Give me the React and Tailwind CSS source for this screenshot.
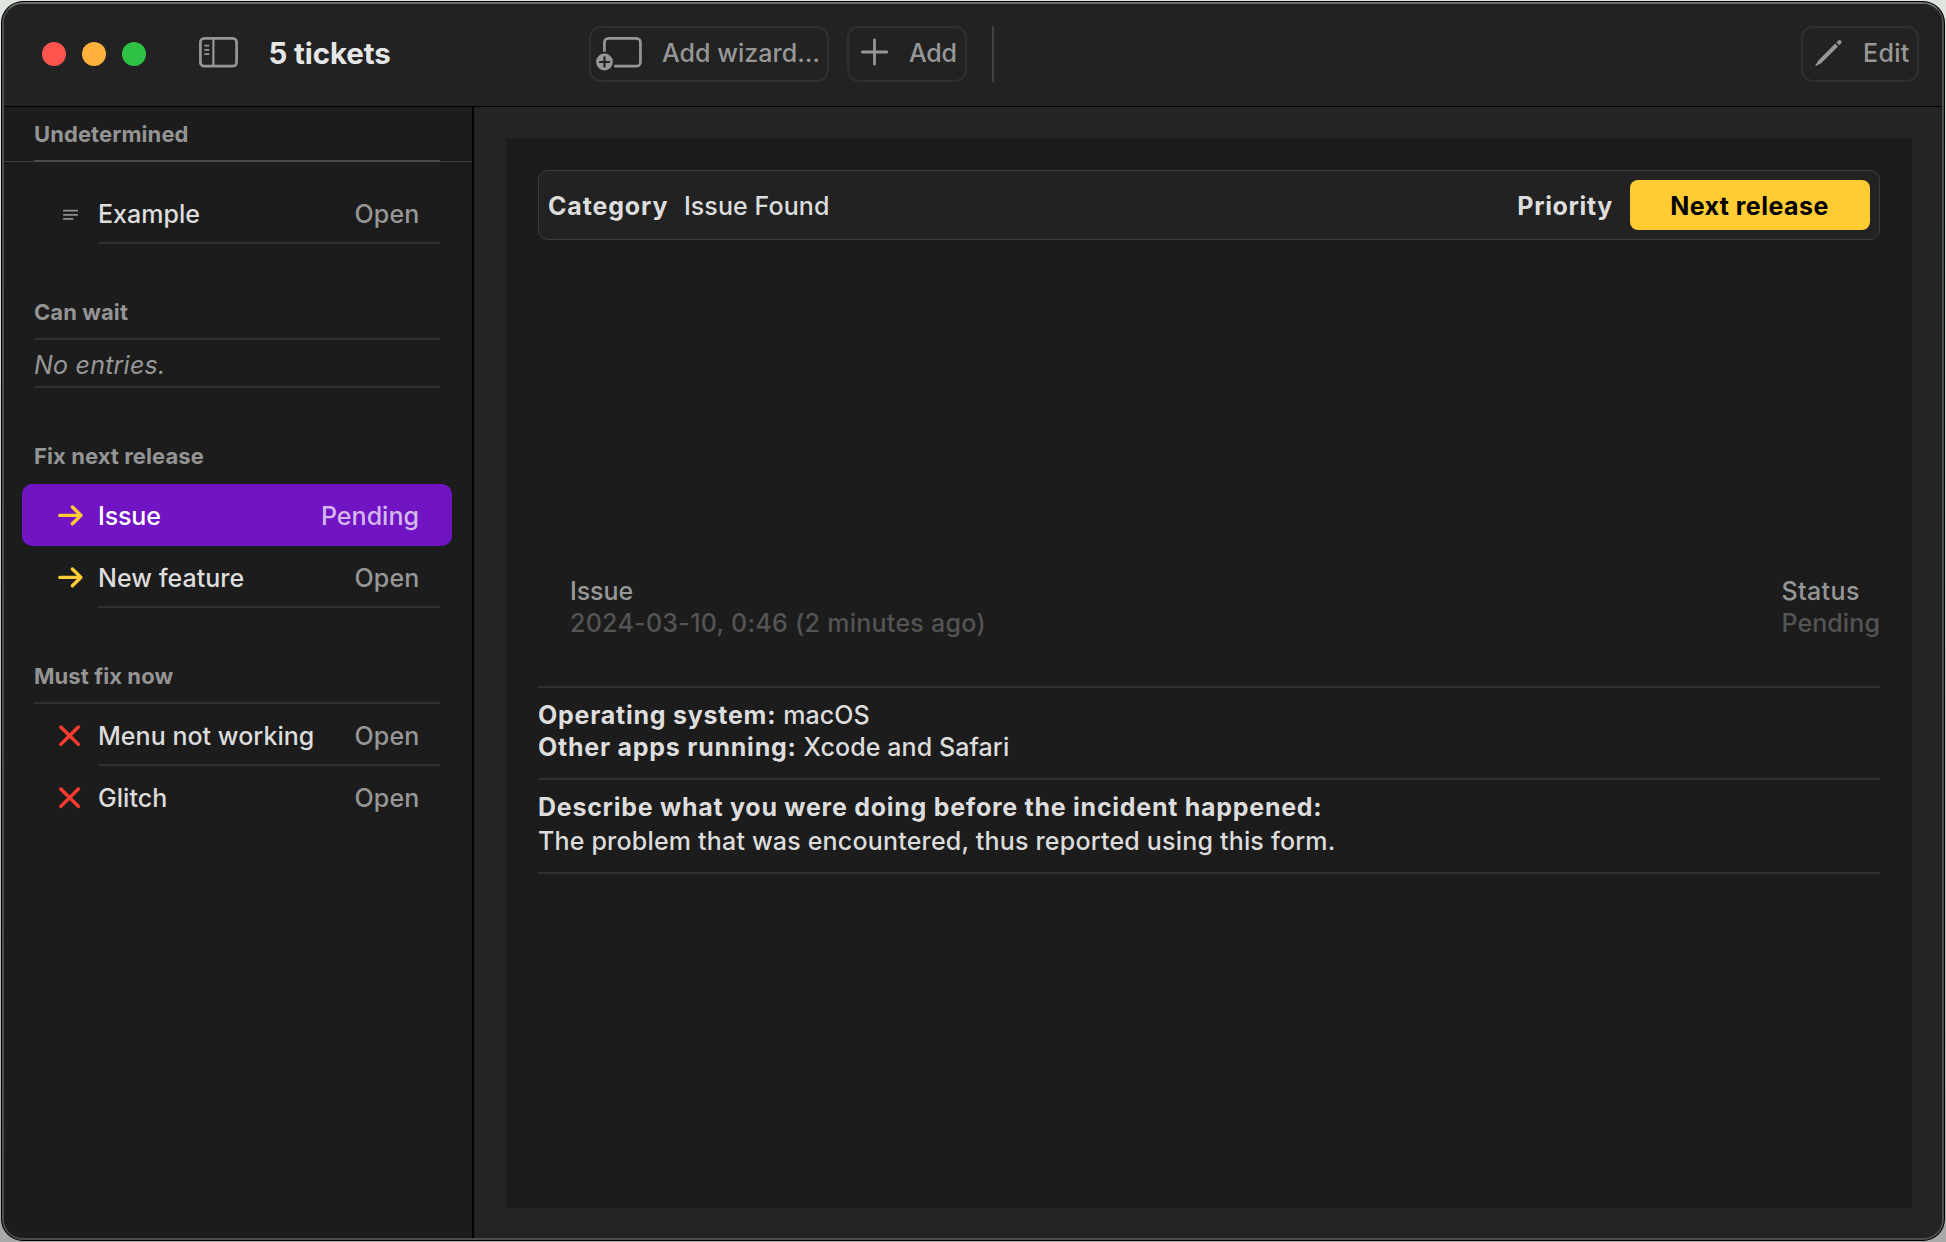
function T({ className = '', children }) {
  return <span className={`block whitespace-nowrap leading-8 ${className}`}>{children}</span>;
}

const body = 'text-[25px] tracking-[0.03px]';
const strong = 'text-[25px] font-bold tracking-[0.75px]';

function SidebarIcon() {
  return (
    <svg className="h-8 w-10" viewBox="0 0 40 32" fill="none" stroke="#979797" strokeLinecap="round">
      <rect x="1.4" y="2.4" width="36.2" height="27.8" rx="3.8" strokeWidth="2.7" />
      <path d="M14.4 3V30" strokeWidth="2.2" strokeLinecap="butt" />
      <path d="M6 9.6h3.6M6 13.9h3.6M6 18.2h3.6" strokeWidth="1.7" />
    </svg>
  );
}

function WizardIcon() {
  return (
    <svg className="h-9 w-[46px]" viewBox="0 0 46 36" fill="none">
      <path d="M8.4 15.8V6.4A4 4 0 0 1 12.4 2.4h28A4 4 0 0 1 44.4 6.4v19.8a4 4 0 0 1-4 4H18.2" stroke="#979797" strokeWidth="2.7" />
      <circle cx="8.5" cy="26" r="8.4" fill="#979797" />
      <path d="M8.5 21.4v9.2M3.9 26h9.2" stroke="#222222" strokeWidth="2.2" strokeLinecap="round" />
    </svg>
  );
}

function PlusIcon() {
  return (
    <svg className="size-7" viewBox="0 0 28 28" fill="none" stroke="#979797" strokeWidth="2.8" strokeLinecap="round">
      <path d="M14.5 1.8v24.4M2.3 14h24.4" />
    </svg>
  );
}

function PencilIcon() {
  return (
    <svg className="size-7" viewBox="0 0 28 28" fill="#979797">
      <path d="M20.2 4.6 23 7.4 6.2 24.2 1.2 26.8a.5.5 0 0 1-.7-.7L3.4 21.4Z" />
      <path d="M21.4 3.4 23.3 1.5a1.9 1.9 0 0 1 2.5 0l.3.3a1.9 1.9 0 0 1 0 2.5L24.2 6.2Z" />
    </svg>
  );
}

function ArrowIcon() {
  return (
    <svg className="h-6 w-[26px]" viewBox="0 0 26 24" fill="none" stroke="#ffcc33" strokeWidth="3.4" strokeLinecap="round" strokeLinejoin="round">
      <path d="M1.8 12.4H22.8M14.4 4 23 12.4l-8.6 8.4" />
    </svg>
  );
}

function CrossIcon() {
  return (
    <svg className="h-6 w-[26px]" viewBox="0 0 26 24" fill="none" stroke="#ff3b30" strokeWidth="3.4" strokeLinecap="round">
      <path d="M2.8 4 20.4 21.4M20.4 4 2.8 21.4" />
    </svg>
  );
}

function LinesIcon() {
  return (
    <svg className="h-6 w-[26px]" viewBox="0 0 26 24" fill="none" stroke="#8f8f8f" strokeWidth="1.8" strokeLinecap="round">
      <path d="M5.8 9.7h13.4M5.8 13.8h13.4M5.8 17.9h8.8" />
    </svg>
  );
}

function Heading({ className = '', children }) {
  return (
    <div className={`ml-[30px] ${className}`}>
      <T className="text-[22px] font-bold tracking-[0.08px] text-[#949494]">{children}</T>
    </div>
  );
}

function Rule() {
  return <div className="mr-8 ml-[30px] h-0.5 bg-[#303030]" />;
}

function Row({ icon, name, status, last }) {
  return (
    <div className="flex h-[62px] pl-[54px]">
      <div className="w-10 pt-[19px]">{icon}</div>
      <div className={`mr-8 flex flex-1 justify-between border-b-2 pt-4 pr-[20.5px] ${last ? 'border-transparent' : 'border-[#303030]'}`}>
        <T className={`${body} text-[#dddddd]`}>{name}</T>
        <T className="text-[25px] tracking-[0.15px] text-[#979797]">{status}</T>
      </div>
    </div>
  );
}

function ToolButton({ className, children }) {
  return (
    <div className={`flex h-14 items-start rounded-xl border-2 border-[#2f2f2f] text-[#979797] ${className}`}>
      {children}
    </div>
  );
}

function Toolbar() {
  return (
    <header className="flex h-[103px] shrink-0 items-start border-b border-black bg-[#222222] pt-[22px] pr-[23px]">
      <div className="flex gap-4 pt-4 pl-[38px]">
        <div className="size-6 rounded-full bg-[#ff544e]" />
        <div className="size-6 rounded-full bg-[#ffb13b]" />
        <div className="size-6 rounded-full bg-[#2fc146]" />
      </div>
      <div className="ml-[53px] pt-[10px]">
        <SidebarIcon />
      </div>
      <T className="ml-[29.5px] w-[320.5px] pt-[11px] text-[29.5px] font-bold tracking-[-0.12px] text-[#e6e6e6]">5 tickets</T>
      <ToolButton className="w-60 pl-[5px]">
        <div className="pt-2">
          <WizardIcon />
        </div>
        <T className="ml-[20px] pt-[9px] text-[25px] tracking-[0.02px]">Add wizard…</T>
      </ToolButton>
      <ToolButton className="ml-[18px] w-[120px] pl-[11px]">
        <div className="pt-[10px]">
          <PlusIcon />
        </div>
        <T className="ml-[21px] pt-[9px] text-[25px] tracking-[-0.25px]">Add</T>
      </ToolButton>
      <div className="ml-[25px] h-14 w-0.5 bg-[#414141]" />
      <ToolButton className="ml-auto w-[118px] pl-3">
        <div className="pt-[11px]">
          <PencilIcon />
        </div>
        <T className="ml-[20px] pt-[9px] text-[25px] tracking-[0.3px]">Edit</T>
      </ToolButton>
    </header>
  );
}

function Sidebar() {
  return (
    <aside className="w-[470px] shrink-0 border-r-2 border-black bg-[#1c1c1c]">
      <Heading className="pt-[11px]">Undetermined</Heading>
      <div className="mt-[10px] flex h-0.5">
        <div className="mt-px h-px w-[30px] bg-[#3c3c3c]" />
        <div className="h-0.5 flex-1 bg-[#4a4a4a]" />
        <div className="mt-px h-px w-8 bg-[#3c3c3c]" />
      </div>
      <div className="pt-5">
        <Row icon={<LinesIcon />} name="Example" status="Open" />
      </div>

      <Heading className="pt-[52px] pb-[10px]">Can wait</Heading>
      <Rule />
      <T className="mt-[9px] mb-[5px] ml-[30px] text-[25px] tracking-[0.22px] text-[#979797] italic">No entries.</T>
      <Rule />

      <Heading className="pt-[52px] pb-3">Fix next release</Heading>
      <div className="mr-5 ml-[18px] flex h-[62px] rounded-[10px] bg-[#7014c4] pr-[33px] pl-9">
        <div className="w-10 pt-[19px]">
          <ArrowIcon />
        </div>
        <div className="flex flex-1 justify-between pt-4">
          <T className="text-[25px] tracking-[-0.15px] text-white">Issue</T>
          <T className="text-[25px] tracking-[0.02px] text-[#d4b8ed]">Pending</T>
        </div>
      </div>
      <Row icon={<ArrowIcon />} name="New feature" status="Open" />

      <Heading className="pt-[52px] pb-[10px]">Must fix now</Heading>
      <Rule />
      <Row icon={<CrossIcon />} name="Menu not working" status="Open" />
      <Row icon={<CrossIcon />} name="Glitch" status="Open" last />
    </aside>
  );
}

function Field({ label, value }) {
  return (
    <div className="flex">
      <T className={strong}>{label}</T>
      <T className="ml-[7px] text-[25px] tracking-[0.08px]">{value}</T>
    </div>
  );
}

function Detail() {
  return (
    <main className="flex-1 bg-[#242424] pt-[31px] pr-[30px] pb-[30px] pl-8">
      <div className="h-full bg-[#1c1c1c] px-8 pt-8 text-[#dddddd]">
        <div className="flex h-[70px] items-start rounded-[10px] border border-[#3d3d3d] bg-[#222222] pt-[9px] pr-[9px] pl-[9px]">
          <T className="pt-[10px] text-[25px] font-bold tracking-[0.85px]">Category</T>
          <T className="ml-[15.5px] pt-[10px] text-[25px] tracking-[0.1px]">Issue Found</T>
          <T className="mr-[17px] ml-auto pt-[10px] text-[25px] font-bold tracking-[0.64px]">Priority</T>
          <div className="flex h-[50px] w-60 justify-center rounded-lg bg-[#ffcc33] pt-[10px] pr-px text-black">
            <T className="text-[25px] font-bold tracking-[0.45px]">Next release</T>
          </div>
        </div>

        <div className="mt-[335px] flex justify-between pl-8">
          <div>
            <T className="text-[25px] tracking-[-0.1px] text-[#979797]">Issue</T>
            <T className="text-[25px] tracking-[0.28px] text-[#545454]">2024-03-10, 0:46 (2 minutes ago)</T>
          </div>
          <div>
            <T className="text-[25px] tracking-[0.4px] text-[#979797]">Status</T>
            <T className="text-[25px] tracking-[0.1px] text-[#545454]">Pending</T>
          </div>
        </div>

        <div className="mt-[47px] border-y-2 border-[#303030] pt-[11px] pb-[15px]">
          <Field label="Operating system:" value="macOS" />
          <Field label="Other apps running:" value="Xcode and Safari" />
        </div>
        <div className="border-b-2 border-[#303030] pt-[11px] pb-[15px]">
          <T className="text-[25px] font-bold tracking-[0.73px]">Describe what you were doing before the incident happened:</T>
          <T className="mt-0.5 text-[25px] tracking-[0.19px]">The problem that was encountered, thus reported using this form.</T>
        </div>
      </div>
    </main>
  );
}

export default function App() {
  return (
    <div className="h-[1242px] w-[1946px] overflow-hidden bg-linear-to-b from-[#dfe6e0] to-[#a8a8a8] p-px font-['Inter',sans-serif] font-[450]">
      <div className="h-full overflow-hidden rounded-[22px] bg-black p-px">
        <div className="flex h-full flex-col overflow-hidden rounded-[21px] border-2 border-t-[#6b706c] border-r-[#505050] border-b-[#4c4c4c] border-l-[#4c4f4e] bg-[#222222]">
          <Toolbar />
          <div className="flex min-h-0 flex-1">
            <Sidebar />
            <Detail />
          </div>
        </div>
      </div>
    </div>
  );
}
